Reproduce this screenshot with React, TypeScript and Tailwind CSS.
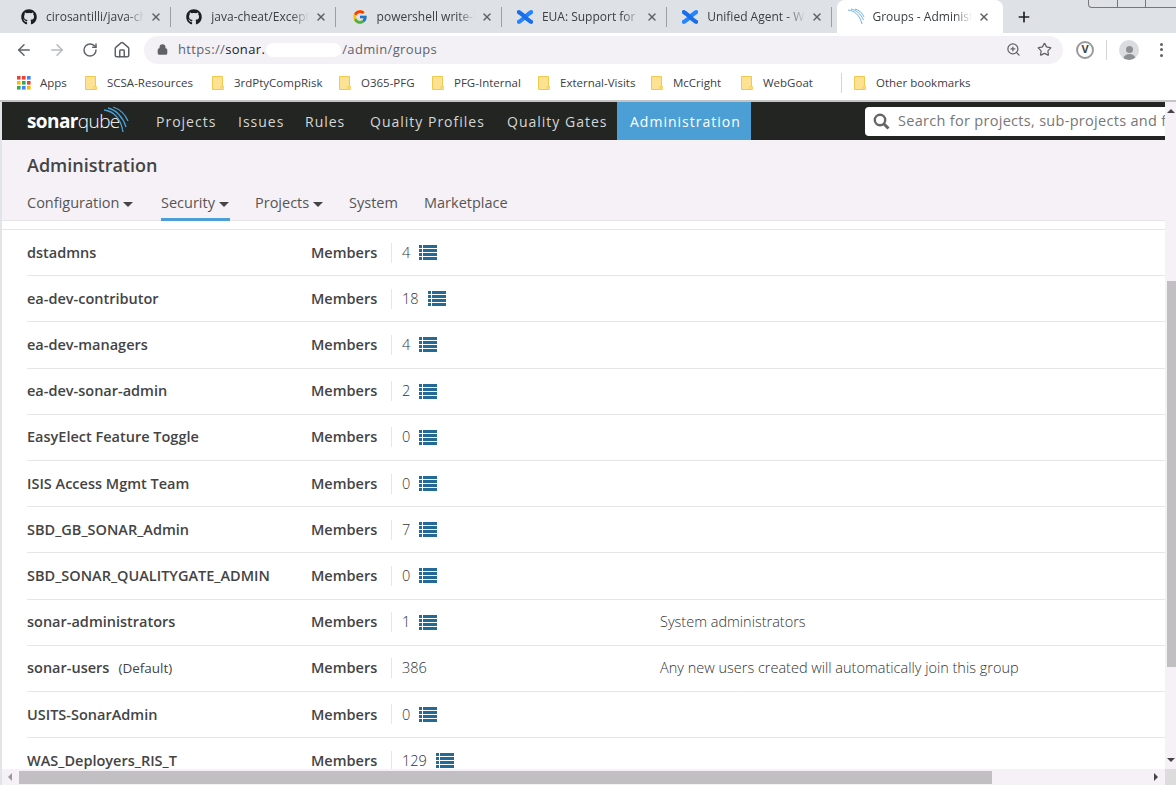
import React from 'react';
import { ArrowLeft, ArrowRight, RotateCw, Home, Lock, ZoomIn, Star, X, Plus, ChevronDown } from 'lucide-react';
import { FaGithub } from 'react-icons/fa';
import { FcGoogle } from 'react-icons/fc';

const ConfluenceIcon = () => (
  <svg width="18" height="18" viewBox="0 0 18 18" fill="none">
    <path d="M2 14.5C6 13 11 6 16 3.5" stroke="#2684ff" strokeWidth="4.5" strokeLinecap="round" />
    <path d="M2 3.5C7 6 12 13 16 14.5" stroke="#1a6fe8" strokeWidth="4.5" strokeLinecap="round" />
  </svg>
);

const SonarFavicon = () => (
  <svg width="18" height="18" viewBox="0 0 18 18" fill="none" stroke="#6fb3dd" strokeWidth="1">
    <path d="M1 2C7 2.5 13 7 15 16" />
    <path d="M4 1C9 2 14 6 16.5 12" />
    <path d="M8 1C12 2 15.5 5 17 9" />
  </svg>
);

const Folder = () => (
  <svg width="12" height="14" viewBox="0 0 12 14" className="shrink-0">
    <path d="M0.5 0.5H10.5V13.5H0.5Z" fill="#fde293" stroke="#f2c94c" />
    <path d="M9 10.5H11.5V13.5H9Z" fill="#fde293" stroke="#f2c94c" strokeWidth="0.8" />
  </svg>
);

const AppsGrid = () => (
  <svg width="14" height="14" viewBox="0 0 14 14" className="shrink-0">
    {['#ea4335', '#ea4335', '#4285f4', '#fbbc05', '#34a853', '#ea4335', '#34a853', '#4285f4', '#fbbc05'].map((c, i) => (
      <rect key={i} x={(i % 3) * 5} y={Math.floor(i / 3) * 5} width="3.6" height="3.6" fill={c} />
    ))}
  </svg>
);

const ListIcon = () => (
  <svg width="18" height="15" viewBox="0 0 18 15" fill="#236a97" className="shrink-0">
    {[0, 4, 8, 12].map((y) => (
      <g key={y}>
        <rect x="0" y={y} width="3" height="3" />
        <rect x="4" y={y} width="14" height="3" />
      </g>
    ))}
  </svg>
);

const SonarArcs = () => (
  <svg width="26" height="28" viewBox="0 0 26 28" fill="none" stroke="#4b9fd5" strokeWidth="1.3" className="absolute left-[76px] top-[-6px]">
    <path d="M1 4C11 5 18 13 20 26" />
    <path d="M5 2C13 4 20 11 23 21" />
    <path d="M10 1C16 3 22 8 25 15" />
  </svg>
);

const tabs = [
  { title: 'cirosantilli/java-cheat', icon: <FaGithub size={16} color="#1b1f23" /> },
  { title: 'java-cheat/Exceptions', icon: <FaGithub size={16} color="#1b1f23" /> },
  { title: 'powershell write-host', icon: <FcGoogle size={16} /> },
  { title: 'EUA: Support for Micro', icon: <ConfluenceIcon /> },
  { title: 'Unified Agent - What', icon: <ConfluenceIcon /> },
];

const bookmarks: { label: string; width: string }[] = [
  { label: 'SCSA-Resources', width: 'w-[127px]' },
  { label: '3rdPtyCompRisk', width: 'w-[127px]' },
  { label: 'O365-PFG', width: 'w-[93px]' },
  { label: 'PFG-Internal', width: 'w-[106px]' },
  { label: 'External-Visits', width: 'w-[113px]' },
  { label: 'McCright', width: 'w-[90px]' },
  { label: 'WebGoat', width: 'w-[100px]' },
];

const groups: { name: string; suffix?: string; count: number; desc?: string; noIcon?: boolean; light?: boolean }[] = [
  { name: 'dstadmns', count: 4 },
  { name: 'ea-dev-contributor', count: 18 },
  { name: 'ea-dev-managers', count: 4 },
  { name: 'ea-dev-sonar-admin', count: 2 },
  { name: 'EasyElect Feature Toggle', count: 0 },
  { name: 'ISIS Access Mgmt Team', count: 0 },
  { name: 'SBD_GB_SONAR_Admin', count: 7 },
  { name: 'SBD_SONAR_QUALITYGATE_ADMIN', count: 0 },
  { name: 'sonar-administrators', count: 1, desc: 'System administrators' },
  { name: 'sonar-users', suffix: '(Default)', count: 386, desc: 'Any new users created will automatically join this group', noIcon: true },
  { name: 'USITS-SonarAdmin', count: 0 },
  { name: 'WAS_Deployers_RIS_T', count: 129 },
];

const navItems = [
  { label: 'Projects', width: 'w-[82px]' },
  { label: 'Issues', width: 'w-[67px]' },
  { label: 'Rules', width: 'w-[65px]' },
  { label: 'Quality Profiles', width: 'w-[137px]' },
  { label: 'Quality Gates', width: 'w-[110px]' },
];

const Caret = () => <span className="ml-[4px] inline-block border-x-[5px] border-t-[5px] border-x-transparent border-t-[#444] align-middle" />;

const Tab = ({ title, icon }: { title: string; icon: React.ReactNode }) => (
  <div className="flex h-[33px] w-[165.3px] shrink-0 items-center pl-[10px]">
    <span className="flex w-[16px] shrink-0 items-center justify-center">{icon}</span>
    <span className="ml-[9px] w-[98px] overflow-hidden whitespace-nowrap text-[12px] text-[#3c4043] [mask-image:linear-gradient(to_right,black_82%,transparent)]">{title}</span>
    <X size={12} strokeWidth={3} className="ml-[6px] shrink-0 text-[#5f6368]" />
    <span className="ml-[8px] h-[20px] w-px shrink-0 bg-[#9aa0a6]" />
  </div>
);

export default function App() {
  return (
    <div className="relative flex h-[785px] w-[1176px] flex-col overflow-hidden bg-white font-['Open_Sans',sans-serif] text-[#444]">
      {/* browser chrome */}
      <div className="flex h-[33px] shrink-0 items-center bg-[#dee1e6] pl-[11px]">
        {tabs.map((t) => (
          <Tab key={t.title} title={t.title} icon={t.icon} />
        ))}
        <div className="flex h-[33px] w-[166px] shrink-0 items-center rounded-t-lg bg-white pl-[10px]">
          <SonarFavicon />
          <span className="ml-[7px] w-[100px] overflow-hidden whitespace-nowrap text-[12px] text-[#3c4043] [mask-image:linear-gradient(to_right,black_82%,transparent)]">Groups - Administration</span>
          <X size={12} strokeWidth={3} className="ml-[6px] shrink-0 text-[#5f6368]" />
        </div>
        <Plus size={16} strokeWidth={2.5} className="ml-[13px] text-[#202124]" />
      </div>
      <div className="absolute right-0 top-0 flex h-[8px] w-[88px] rounded-bl-sm border-b border-l border-[#777]">
        <span className="w-[29px] border-r border-[#777]" />
        <span className="w-[28px] border-r border-[#777]" />
      </div>

      <div className="flex h-[33px] shrink-0 items-center bg-white pl-[15px] text-[#5f6368]">
        <ArrowLeft size={18} strokeWidth={2} />
        <ArrowRight size={18} strokeWidth={2} className="ml-[15px] text-[#b6b9bd]" />
        <RotateCw size={16} strokeWidth={2.2} className="ml-[16px]" />
        <Home size={18} strokeWidth={2} className="ml-[15px]" />
        <div className="ml-[13px] flex h-[28px] w-[919px] items-center rounded-full bg-[#f4f1f6] pl-[13px] pr-[10px]">
          <Lock size={11} strokeWidth={3} fill="#5f6368" />
          <span className="ml-[10px] text-[13px] tracking-[0.35px] text-[#5f6368]">https://<span className="text-[#202124]">sonar.</span></span>
          <span className="ml-[1px] h-[14px] w-[75px] rounded-full bg-white" />
          <span className="ml-[1px] text-[13px] tracking-[0.35px] text-[#5f6368]">/admin/groups</span>
          <ZoomIn size={15} className="ml-auto" />
          <Star size={15} strokeWidth={2} className="ml-[16px] mr-[1px]" />
        </div>
        <span className="ml-[13px] flex h-[18px] w-[18px] items-center justify-center rounded-full border-2 border-[#9a9a9a] text-[11px] font-bold text-[#444]">V</span>
        <span className="ml-[12px] h-[20px] w-px bg-[#d5d5d5]" />
        <span className="ml-[12px] flex h-[20px] w-[20px] flex-col items-center justify-end overflow-hidden rounded-full bg-[#dadce0]">
          <span className="h-[7px] w-[7px] rounded-full bg-[#8d8f93]" />
          <span className="mt-[1px] h-[6px] w-[13px] rounded-t-full bg-[#8d8f93]" />
        </span>
        <span className="ml-[21px] flex flex-col gap-[2.5px]">
          <span className="h-[3px] w-[3px] rounded-full bg-[#5f6368]" />
          <span className="h-[3px] w-[3px] rounded-full bg-[#5f6368]" />
          <span className="h-[3px] w-[3px] rounded-full bg-[#5f6368]" />
        </span>
      </div>

      <div className="flex h-[34px] shrink-0 items-center whitespace-nowrap bg-white pl-[17px] text-[11.5px] text-[#3c4043]">
        <AppsGrid />
        <span className="ml-[9px] w-[45px]">Apps</span>
        {bookmarks.map((b) => (
          <div key={b.label} className={`flex shrink-0 items-center ${b.width}`}>
            <Folder />
            <span className="ml-[10px]">{b.label}</span>
          </div>
        ))}
        <span className="h-[20px] w-px bg-[#d5d5d5]" />
        <span className="ml-[12px]"><Folder /></span>
        <span className="ml-[10px]">Other bookmarks</span>
      </div>
      <div className="h-[2px] shrink-0 bg-[#c4c4c4]" />

      {/* page */}
      <div className="flex h-[667px] shrink-0 border-l-2 border-[#e1e5ea]">
        <div className="flex w-[1163px] shrink-0 flex-col overflow-hidden">
          <div className="flex h-[38px] shrink-0 items-center bg-[#232522] pl-[25px] text-[14px] tracking-[1px] text-[#d6d6d6]">
            <div className="relative w-[129px] whitespace-nowrap text-[19px] leading-none tracking-[-0.6px] text-white">
              <span className="font-bold">sonar</span><span className="font-light">qube</span>
              <SonarArcs />
            </div>
            {navItems.map((n) => (
              <span key={n.label} className={`${n.width} shrink-0 whitespace-nowrap`}>{n.label}</span>
            ))}
            <span className="flex h-[38px] w-[134px] shrink-0 items-center bg-[#4b9fd5] pl-[13px] text-white">Administration</span>
            <div className="ml-[114px] flex h-[29px] flex-1 items-center overflow-hidden rounded-l-sm bg-white pl-[8px] text-[14.5px] tracking-[0.3px] text-[#777]">
              <svg width="17" height="17" viewBox="0 0 17 17" fill="none" stroke="#666" className="shrink-0">
                <circle cx="7" cy="7" r="5.2" strokeWidth="2.4" />
                <path d="M11 11L15.5 15.5" strokeWidth="3" />
              </svg>
              <span className="ml-[8px] whitespace-nowrap">Search for projects, sub-projects and files...</span>
            </div>
          </div>

          <div className="flex h-[81px] shrink-0 flex-col border-b border-[#e6e6e6] bg-[#f5f1f6] pl-[25px]">
            <h1 className="mt-[13px] h-[24px] text-[18px] font-semibold leading-[24px] text-[#444]">Administration</h1>
            <div className="mt-[14px] flex text-[14.5px] leading-[24px] text-[#555]">
              <span className="w-[134px]">Configuration<Caret /></span>
              <span className="h-[30px] w-[69px] border-b-[3px] border-[#4b9fd5]">Security<Caret /></span>
              <span className="ml-[25px] w-[94px]">Projects<Caret /></span>
              <span className="w-[75px]">System</span>
              <span>Marketplace</span>
            </div>
          </div>

          <div className="mt-[8px] flex flex-col border-t border-[#e6e6e6] pl-[25px]">
            {groups.map((g) => (
              <div key={g.name} className="flex h-[46.2px] shrink-0 items-center border-b border-[#e6e6e6] text-[14.5px] text-[#444]">
                <div className="w-[284px] shrink-0 whitespace-nowrap font-semibold">
                  {g.name}
                  {g.suffix && <span className="ml-[9px] text-[13.5px] font-normal">{g.suffix}</span>}
                </div>
                <div className="flex h-[20px] w-[81px] shrink-0 items-center border-r border-[#e6e6e6] font-semibold">Members</div>
                <div className="flex w-[268px] shrink-0 items-center pl-[10px] font-light text-[#333]">
                  <span>{g.count}</span>
                  {!g.noIcon && <span className="ml-[9px]"><ListIcon /></span>}
                </div>
                <div className="whitespace-nowrap text-[14.5px] font-light text-[#333]">{g.desc}</div>
              </div>
            ))}
          </div>
        </div>

        {/* vertical scrollbar */}
        <div className="flex w-[11px] shrink-0 flex-col items-end bg-[#f5f1f6]">
          <span className="mr-[1px] mt-[7px] border-x-[4px] border-b-[4px] border-x-transparent border-b-[#444]" />
          <span className="mt-[168px] h-[386px] w-[9px] bg-[#c2bfc3]" />
          <span className="mr-[1px] mt-[91px] border-x-[4px] border-t-[4px] border-x-transparent border-t-[#444]" />
        </div>
      </div>

      {/* horizontal scrollbar */}
      <div className="flex h-[16px] shrink-0 items-center border-l-2 border-[#e1e5ea] bg-[#f5f1f6]">
        <span className="ml-[6px] border-y-[4px] border-r-[4px] border-y-transparent border-r-[#999]" />
        <span className="ml-[7px] h-[13px] w-[973px] bg-[#c2bfc3]" />
        <span className="ml-[162px] border-y-[4px] border-l-[4px] border-y-transparent border-l-[#444]" />
        <span className="ml-auto h-[16px] w-[11px] bg-[#dcdcdc]" />
      </div>
    </div>
  );
}
